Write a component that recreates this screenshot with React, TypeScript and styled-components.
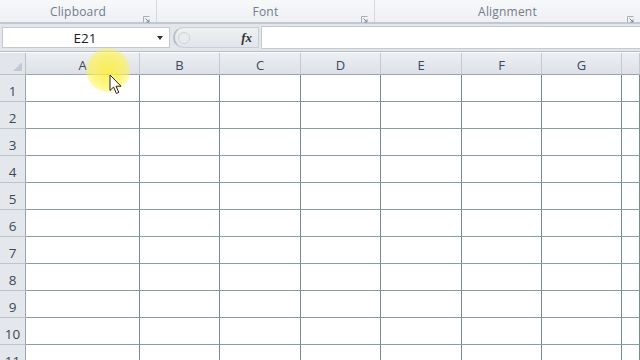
import React from "react";
import styled, { createGlobalStyle } from "styled-components";

const GlobalStyle = createGlobalStyle`
  html, body {
    margin: 0;
    padding: 0;
    background: #ffffff;
    overflow: hidden;
  }
  body {
    font-family: "Open Sans", "Liberation Sans", Arial, sans-serif;
  }
`;

const Page = styled.div`
  position: relative;
  width: 640px;
  height: 360px;
  overflow: hidden;
  background: #ffffff;
`;

const Ribbon = styled.div`
  display: grid;
  grid-template-columns: 157px 218px 265px;
  height: 22px;
  background: linear-gradient(#f7f8fa, #eef0f4);
  border-bottom: 2px solid #c3c8d0;
`;

const Group = styled.div<{ $last?: boolean }>`
  position: relative;
  display: flex;
  align-items: flex-end;
  justify-content: center;
  padding-bottom: 2px;
  box-sizing: border-box;
  border-right: ${(p) => (p.$last ? "none" : "1px solid #d3d7de")};
  font-size: 12px;
  color: #737c89;
  letter-spacing: 0.2px;
`;

const Launcher = styled.span`
  position: absolute;
  right: 6px;
  top: 10px;
  width: 7px;
  height: 7px;
`;

const FormulaBar = styled.div`
  display: flex;
  align-items: center;
  height: 28px;
  padding: 0 0 0 2px;
  background: #e3e6eb;
  border-bottom: 1px solid #b8bec7;
  box-sizing: border-box;
`;

const NameBox = styled.div`
  display: flex;
  align-items: center;
  width: 168px;
  height: 21px;
  box-sizing: border-box;
  background: #ffffff;
  border: 1px solid #c5cad2;
  font-size: 13.5px;
  color: #1e1e1e;
`;

const NameText = styled.span`
  flex: 1;
  text-align: center;
  padding-left: 10px;
`;

const Caret = styled.span`
  width: 0;
  height: 0;
  margin-right: 6px;
  border-left: 3.5px solid transparent;
  border-right: 3.5px solid transparent;
  border-top: 4px solid #333;
`;

const Pill = styled.div`
  display: flex;
  align-items: center;
  justify-content: space-between;
  width: 86px;
  height: 21px;
  margin-left: 3px;
  box-sizing: border-box;
  padding: 0 6px 0 3px;
  background: linear-gradient(#eef0f3, #e2e5ea);
  border: 1px solid #c9ced6;
  border-left: 2px solid #b9bfc8;
  border-radius: 11px 0 0 11px;
`;

const Knob = styled.span`
  width: 12px;
  height: 12px;
  border-radius: 50%;
  border: 1px solid #cfd3d9;
  background: #e9ebee;
  box-sizing: border-box;
`;

const Fx = styled.span`
  font-family: "Liberation Serif", "DejaVu Serif", serif;
  font-style: italic;
  font-weight: bold;
  font-size: 13px;
  color: #333;
`;

const FormulaInput = styled.div`
  flex: 1;
  height: 21px;
  margin-left: 2px;
  background: #ffffff;
  border: 1px solid #c5cad2;
  border-right: none;
`;

const Sheet = styled.div`
  display: grid;
  grid-template-columns: 26px 114px 80px 81px 80px 81px 80px 80px 1fr;
  grid-template-rows: 22px repeat(11, 27px);
  margin-top: 1px;
`;

const Corner = styled.div`
  position: relative;
  background: #e2e6ec;
  border-right: 1px solid #b9c0ca;
  border-bottom: 1px solid #b9c0ca;
`;

const CornerTri = styled.span`
  position: absolute;
  right: 3px;
  bottom: 3px;
  width: 0;
  height: 0;
  border-left: 9px solid transparent;
  border-bottom: 9px solid #c3c9d2;
`;

const ColHead = styled.div`
  display: flex;
  align-items: center;
  justify-content: center;
  padding-top: 2px;
  box-sizing: border-box;
  background: linear-gradient(#eceff3, #dde1e7);
  border-right: 1px solid #c4cad3;
  border-bottom: 1px solid #9aa5b2;
  font-size: 13px;
  color: #3f4756;
`;

const RowHead = styled.div`
  display: flex;
  align-items: center;
  justify-content: center;
  padding-top: 6px;
  box-sizing: border-box;
  background: #e4e7ec;
  border-right: 1px solid #9aa5b2;
  border-bottom: 1px solid #bcc3cc;
  font-size: 13.5px;
  color: #3f4756;
`;

const Cell = styled.div`
  background: #ffffff;
  border-right: 1px solid #748e8e;
  border-bottom: 1px solid #86a0a0;
`;

const Highlight = styled.div`
  position: absolute;
  left: 86px;
  top: 48px;
  width: 44px;
  height: 44px;
  border-radius: 50%;
  background: radial-gradient(circle, rgba(255, 240, 60, 0.85) 0%, rgba(255, 242, 80, 0.7) 50%, rgba(255, 248, 120, 0) 100%);
  pointer-events: none;
`;

const Pointer = styled.svg`
  position: absolute;
  left: 109px;
  top: 74px;
  pointer-events: none;
`;

const columns = ["A", "B", "C", "D", "E", "F", "G", ""];
const rows = [1, 2, 3, 4, 5, 6, 7, 8, 9, 10, 11];

const LauncherIcon = () => (
  <Launcher>
    <svg width="7" height="7" viewBox="0 0 7 7">
      <path d="M0.5 6.5 V0.5 H6.5" stroke="#a8afb9" fill="none" />
      <path d="M2.5 2.5 L6 6 M3.5 6 H6 V3.5" stroke="#7d8794" fill="none" />
    </svg>
  </Launcher>
);

export default function App() {
  return (
    <Page>
      <GlobalStyle />
      <Ribbon>
        <Group>
          Clipboard
          <LauncherIcon />
        </Group>
        <Group>
          Font
          <LauncherIcon />
        </Group>
        <Group $last>
          Alignment
          <LauncherIcon />
        </Group>
      </Ribbon>
      <FormulaBar>
        <NameBox>
          <NameText>E21</NameText>
          <Caret />
        </NameBox>
        <Pill>
          <Knob />
          <Fx>fx</Fx>
        </Pill>
        <FormulaInput />
      </FormulaBar>
      <Sheet>
        <Corner>
          <CornerTri />
        </Corner>
        {columns.map((c, i) => (
          <ColHead key={"h" + i}>{c}</ColHead>
        ))}
        {rows.map((r) => (
          <React.Fragment key={r}>
            <RowHead>{r}</RowHead>
            {columns.map((_, i) => (
              <Cell key={r + "-" + i} />
            ))}
          </React.Fragment>
        ))}
      </Sheet>
      <Highlight />
      <Pointer width="14" height="22" viewBox="0 0 14 22">
        <path
          d="M1 1 L1 16.5 L4.6 13 L7.4 19.5 L9.8 18.4 L7 12.2 L12 12.2 Z"
          fill="#ffffff"
          stroke="#222"
          strokeWidth="1"
          strokeLinejoin="round"
        />
      </Pointer>
    </Page>
  );
}
